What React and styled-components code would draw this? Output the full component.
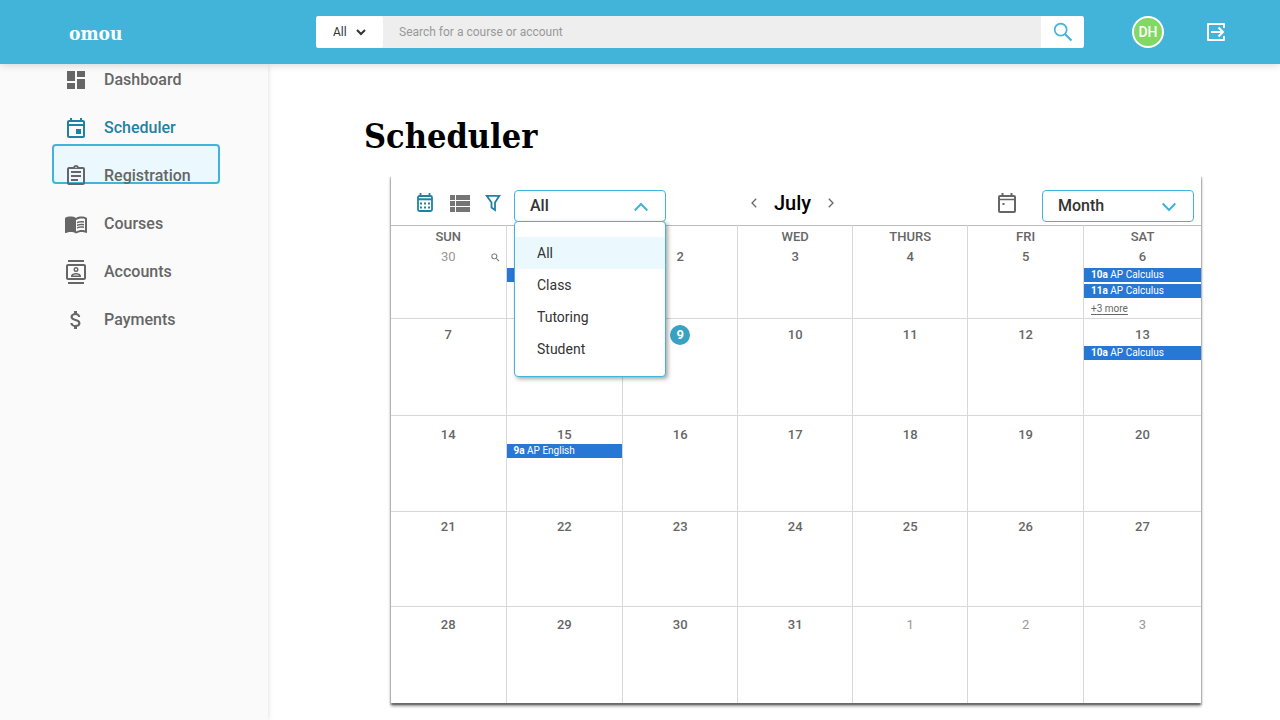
import React, { useState } from "react";
import styled, { createGlobalStyle, css } from "styled-components";
import {
  MdDashboard,
  MdOutlineEvent,
  MdOutlineAssignment,
  MdMenuBook,
  MdOutlineContacts,
  MdAttachMoney,
  MdSearch,
} from "react-icons/md";

const slab = `"Roboto Slab", "DejaVu Serif Condensed", "DejaVu Serif", serif`;

const GlobalStyle = createGlobalStyle`
  *, *::before, *::after { box-sizing: border-box; }
  body {
    margin: 0;
    background: #fff;
    color: #666;
    font-family: Roboto, "Liberation Sans", sans-serif;
  }
  button, input, select { font-family: inherit; }
`;

const Page = styled.div`
  min-height: 100vh;
  display: flex;
  flex-direction: column;
`;

/* Top bar */

const TopBar = styled.header`
  position: relative;
  z-index: 2;
  height: 64px;
  display: flex;
  align-items: center;
  padding-right: 52px;
  background: #43b4d9;
  box-shadow: 0 1px 8px rgba(0, 0, 0, 0.16);
`;

const Logo = styled.a`
  flex: 0 0 316px;
  padding: 2px 0 0 69px;
  color: #fff;
  font: bold 19px/32px ${slab};
  text-decoration: none;
`;

const SearchForm = styled.form`
  flex: 1;
  display: flex;
  height: 32px;
  margin-right: 48px;
  border-radius: 3px;
  overflow: hidden;
  background: #eee;
`;

const ScopeBox = styled.label`
  position: relative;
  width: 67px;
  background: #fff;
  border-radius: 0 3px 3px 0;
`;

const ScopeSelect = styled.select`
  appearance: none;
  width: 100%;
  height: 32px;
  padding: 0 17px;
  border: 0;
  background: transparent;
  color: #333;
  font-size: 12px;
`;

const ScopeArrow = styled.svg`
  position: absolute;
  right: 17px;
  top: 13px;
  pointer-events: none;
`;

const SearchInput = styled.input`
  flex: 1;
  min-width: 0;
  padding: 0 16px;
  border: 0;
  background: #eee;
  color: #333;
  font-size: 12px;
  &::placeholder {
    color: #999;
    opacity: 1;
  }
`;

const SearchButton = styled.button`
  display: flex;
  align-items: center;
  justify-content: center;
  width: 43px;
  padding: 0;
  border: 0;
  background: #fff;
  color: #43b4d9;
`;

const Avatar = styled.button`
  width: 32px;
  height: 32px;
  margin-right: 40px;
  padding: 0;
  border: 2px solid #fff;
  border-radius: 50%;
  background: #82d863;
  color: #fff;
  font-size: 14px;
  font-weight: 500;
`;

const IconButton = styled.button`
  display: inline-flex;
  align-items: center;
  justify-content: center;
  width: ${(p) => p.$w || 24}px;
  height: 24px;
  padding: 0;
  border: 0;
  background: transparent;
  color: ${(p) => p.$color || "#666"};
`;

/* Side navigation */

const Body = styled.div`
  flex: 1;
  display: flex;
`;

const Sidebar = styled.nav`
  flex: 0 0 268px;
  background: #fafafa;
  box-shadow: 0 0 5px rgba(0, 0, 0, 0.15);
`;

const NavList = styled.ul`
  position: relative;
  z-index: 0;
  display: flex;
  flex-direction: column;
  gap: 16px;
  margin: 0;
  padding: 0;
  list-style: none;
`;

const ActiveMarker = styled.li`
  position: absolute;
  z-index: -1;
  left: 52px;
  top: 80px;
  width: 168px;
  height: 40px;
  border: 2px solid #43b4d9;
  border-radius: 4px;
  background: #ebf9ff;
`;

const NavLink = styled.a`
  display: flex;
  align-items: center;
  gap: 16px;
  height: 32px;
  padding-left: 64px;
  color: ${(p) => (p.$active ? "#1f82a1" : "#666")};
  font-size: 16px;
  font-weight: 500;
  text-decoration: none;
`;

const NavLabel = styled.span`
  padding-bottom: 2px;
`;

/* Scheduler page */

const Main = styled.main`
  flex: 1;
  min-width: 0;
  padding: 48px 79px 16px 96px;
`;

const Title = styled.h1`
  margin: 0 0 15px;
  color: #000;
  font: bold 34px/48px ${slab};
`;

const Card = styled.section`
  margin-left: 27px;
  background: #fff;
  box-shadow:
    0 3px 3px rgba(0, 0, 0, 0.45),
    1px 2px 1px rgba(0, 0, 0, 0.15),
    -1px 2px 1px rgba(0, 0, 0, 0.15);
`;

const Toolbar = styled.div`
  display: grid;
  grid-template-columns: 1fr auto 1fr;
  align-items: center;
  height: 50px;
  padding: 6px 7px 0 0;
`;

const ToolGroup = styled.div`
  display: flex;
  align-items: center;
  gap: ${(p) => p.$gap}px;
  ${(p) => p.$start && css`padding-left: 22px;`}
  ${(p) => p.$end && css`justify-content: flex-end;`}
`;

const MonthName = styled.h2`
  margin: 0;
  color: #000;
  font-size: 20px;
  font-weight: 500;
  line-height: 24px;
`;

const Picker = styled.div`
  position: relative;
  width: 152px;
  height: 32px;
  margin-top: 6px;
`;

const pickerFace = css`
  width: 100%;
  height: 32px;
  padding: 0 15px 2px;
  border: 1px solid #43b4d9;
  border-radius: 4px;
  background: #fff;
  color: #333;
  font-size: 16px;
  font-weight: 500;
  text-align: left;
`;

const PickerButton = styled.button`
  ${pickerFace}
`;

const PickerSelect = styled.select`
  appearance: none;
  ${pickerFace}
`;

const PickerArrow = styled.svg`
  position: absolute;
  right: 18px;
  top: 12px;
  pointer-events: none;
`;

const Menu = styled.ul`
  position: absolute;
  z-index: 1;
  top: 31px;
  left: 0;
  width: 100%;
  margin: 0;
  padding: 15px 0 11px;
  border: 1px solid #43b4d9;
  border-radius: 4px;
  background: #fff;
  box-shadow: 2px 2px 4px rgba(0, 0, 0, 0.35);
  list-style: none;
`;

const MenuOption = styled.button`
  display: block;
  width: 100%;
  height: 32px;
  padding: 0 22px;
  border: 0;
  background: ${(p) => (p.$selected ? "#ebf9ff" : "transparent")};
  color: #333;
  font-size: 14px;
  text-align: left;
`;

/* Month table */

const MonthTable = styled.table`
  width: 100%;
  table-layout: fixed;
  border-collapse: collapse;
  border-top: 1px solid #bbb;
`;

const DayColumn = styled.col`
  width: ${(p) => p.$share}%;
`;

const Weekday = styled.th`
  height: 21px;
  padding: 2px 0 0;
  border-left: 1px solid #d8d8d8;
  font-size: 13px;
  font-weight: 500;
  line-height: 18px;
  &:first-child {
    border-left: 0;
  }
`;

const Day = styled.td`
  position: relative;
  height: ${(p) => p.$height}px;
  padding: ${(p) => p.$top}px 0 0;
  border-left: 1px solid #d8d8d8;
  border-bottom: 1px solid #d8d8d8;
  vertical-align: top;
  &:first-child {
    border-left: 0;
  }
  tr:last-child > & {
    border-bottom: 0;
  }
`;

const DayNumber = styled.div`
  color: ${(p) => (p.$muted ? "#999" : "#666")};
  font-size: 13px;
  font-weight: ${(p) => (p.$muted ? 400 : 500)};
  line-height: ${(p) => p.$line}px;
  text-align: center;
`;

const Today = styled.span`
  display: inline-block;
  width: 20px;
  height: 20px;
  border-radius: 50%;
  background: #39a1c2;
  color: #fff;
  font-weight: 700;
`;

const DayZoom = styled.button`
  position: absolute;
  right: 5px;
  top: 5px;
  display: flex;
  padding: 0;
  border: 0;
  background: transparent;
  color: #666;
`;

const Event = styled.a`
  display: block;
  height: 14px;
  margin-top: 1px;
  margin-bottom: 2px;
  padding-left: 7px;
  background: #2777d7;
  color: #fff;
  font-size: 10px;
  line-height: 14px;
  text-decoration: none;
  white-space: nowrap;
  overflow: hidden;
`;

const More = styled.a`
  display: block;
  padding: 2px 7px 0;
  color: #666;
  font-size: 10px;
  line-height: 14px;
  text-underline-offset: 2px;
`;

const navItems = [
  { label: "Dashboard", Icon: MdDashboard },
  { label: "Scheduler", Icon: MdOutlineEvent, active: true },
  { label: "Registration", Icon: MdOutlineAssignment },
  { label: "Courses", Icon: MdMenuBook },
  { label: "Accounts", Icon: MdOutlineContacts },
  { label: "Payments", Icon: MdAttachMoney },
];

const weekdays = [
  { name: "Sunday", label: "SUN", share: 14.2 },
  { name: "Monday", label: "", share: 14.4 },
  { name: "Tuesday", label: "", share: 14.2 },
  { name: "Wednesday", label: "WED", share: 14.2 },
  { name: "Thursday", label: "THURS", share: 14.2 },
  { name: "Friday", label: "FRI", share: 14.3 },
  { name: "Saturday", label: "SAT", share: 14.5 },
];

const weeks = [
  { height: 72, top: 0, line: 20, days: [30, 1, 2, 3, 4, 5, 6] },
  { height: 97, top: 6, line: 20, days: [7, 8, 9, 10, 11, 12, 13] },
  { height: 96, top: 11, line: 16, days: [14, 15, 16, 17, 18, 19, 20] },
  { height: 95, top: 5, line: 20, days: [21, 22, 23, 24, 25, 26, 27] },
  { height: 96, top: 8, line: 20, days: [28, 29, 30, 31, 1, 2, 3] },
];

const events = {
  1: [["10a", "AP Calculus"]],
  6: [["10a", "AP Calculus"], ["11a", "AP Calculus"]],
  13: [["10a", "AP Calculus"]],
  15: [["9a", "AP English"]],
};

const more = { 6: 3 };

function isOutside(week, day) {
  return (week === 0 && day > 7) || (week === 4 && day < 7);
}

function Arrow({ up }) {
  return (
    <PickerArrow width="14" height="10" viewBox="0 0 14 10" fill="none" stroke="#43b4d9" strokeWidth="2" aria-hidden="true">
      <path d={up ? "M.7 8.500 7 2l6.300 6.500" : "M.7 1.500 7 8l6.300-6.500"} />
    </PickerArrow>
  );
}

function SearchIcon() {
  return (
    <svg width="20" height="20" viewBox="0 0 20 20" fill="none" stroke="currentColor" strokeWidth="1.700" aria-hidden="true">
      <circle cx="7.700" cy="7.700" r="6" />
      <path d="M12 12l6.500 6.500" strokeWidth="2.200" />
    </svg>
  );
}

function LogoutIcon() {
  return (
    <svg width="20" height="20" viewBox="0 0 20 20" fill="none" stroke="currentColor" strokeWidth="2" aria-hidden="true">
      <path d="M18 6V2H2v16h16v-4" strokeLinejoin="round" />
      <path d="M5 10h12M12.500 5.500 17 10l-4.500 4.500" />
    </svg>
  );
}

function CalendarGridIcon() {
  return (
    <svg width="18" height="20" viewBox="0 0 18 20" fill="none" stroke="currentColor" aria-hidden="true">
      <rect x="2" y="3" width="14" height="15" rx="1.500" strokeWidth="1.800" />
      <path d="M2 6.300h14" strokeWidth="2" />
      <path d="M4.500 0v4M13.500 0v4" strokeWidth="1.800" />
      <path d="M4 10.500h10M4 14.500h10" strokeWidth="2" strokeDasharray="2 2" />
    </svg>
  );
}

function ListIcon() {
  return (
    <svg width="20" height="17" viewBox="0 0 20 17" fill="#757575" aria-hidden="true">
      <path d="M0 0h5v5H0zM6 0h14v5H6zM0 6h5v5H0zM6 6h14v5H6zM0 12h5v5H0zM6 12h14v5H6z" />
    </svg>
  );
}

function FilterIcon() {
  return (
    <svg width="16" height="18" viewBox="0 0 16 18" fill="none" stroke="currentColor" strokeWidth="1.800" aria-hidden="true">
      <path d="M1.700 1.900h12.600L10 8.500v7.500l-3.500-2.500v-5z" />
    </svg>
  );
}

function TodayIcon() {
  return (
    <svg width="18" height="20" viewBox="0 0 18 20" fill="none" stroke="currentColor" aria-hidden="true">
      <rect x="1" y="3" width="16" height="16" rx="1" strokeWidth="2" />
      <path d="M1 6.500h16" strokeWidth="1.500" />
      <path d="M4.500 0v3M13.500 0v3" strokeWidth="2" />
      <path d="M4.500 11h2" strokeWidth="2" />
    </svg>
  );
}

function Chevron({ left }) {
  return (
    <svg width="6" height="10" viewBox="0 0 6 10" fill="none" stroke="currentColor" strokeWidth="1.300" aria-hidden="true">
      <path d={left ? "M5.200.7 1 5l4.200 4.300" : "M.8.7 5 5 .8 9.300"} />
    </svg>
  );
}

function FilterPicker() {
  const options = ["All", "Class", "Tutoring", "Student"];
  const [open, setOpen] = useState(true);
  const [value, setValue] = useState("All");
  return (
    <Picker>
      <PickerButton type="button" aria-haspopup="true" aria-expanded={open} onClick={() => setOpen(!open)}>
        {value}
      </PickerButton>
      <Arrow up={open} />
      {open && (
        <Menu>
          {options.map((name) => (
            <li key={name}>
              <MenuOption
                type="button"
                $selected={name === value}
                onClick={() => {
                  setValue(name);
                  setOpen(false);
                }}
              >
                {name}
              </MenuOption>
            </li>
          ))}
        </Menu>
      )}
    </Picker>
  );
}

function DayCell({ week, weekIndex, day }) {
  const outside = isOutside(weekIndex, day);
  return (
    <Day $height={week.height} $top={week.top}>
      <DayNumber $muted={outside} $line={week.line}>
        {day === 9 ? <Today>9</Today> : day}
      </DayNumber>
      {weekIndex === 0 && outside && (
        <DayZoom type="button" aria-label="Zoom to day">
          <MdSearch size={11} />
        </DayZoom>
      )}
      {!outside &&
        (events[day] || []).map(([time, name]) => (
          <Event href="#event" key={time}>
            <b>{time}</b> {name}
          </Event>
        ))}
      {!outside && more[day] && <More href="#more">+{more[day]} more</More>}
    </Day>
  );
}

export default function App() {
  return (
    <Page>
      <GlobalStyle />
      <TopBar>
        <Logo href="#home">omou</Logo>
        <SearchForm role="search" onSubmit={(e) => e.preventDefault()}>
          <ScopeBox>
            <ScopeSelect aria-label="Search scope" defaultValue="All">
              <option>All</option>
            </ScopeSelect>
            <ScopeArrow width="10" height="7" viewBox="0 0 10 7" fill="none" stroke="#333" strokeWidth="2" aria-hidden="true">
              <path d="M1 1l4 4 4-4" />
            </ScopeArrow>
          </ScopeBox>
          <SearchInput aria-label="Search" placeholder="Search for a course or account" />
          <SearchButton aria-label="Submit search">
            <SearchIcon />
          </SearchButton>
        </SearchForm>
        <Avatar type="button">DH</Avatar>
        <IconButton type="button" $color="#fff" aria-label="Log out">
          <LogoutIcon />
        </IconButton>
      </TopBar>
      <Body>
        <Sidebar aria-label="Main">
          <NavList>
            <ActiveMarker aria-hidden="true" />
            {navItems.map(({ label, Icon, active }) => (
              <li key={label}>
                <NavLink href={`#${label.toLowerCase()}`} $active={active} aria-current={active ? "page" : undefined}>
                  <Icon size={24} />
                  <NavLabel>{label}</NavLabel>
                </NavLink>
              </li>
            ))}
          </NavList>
        </Sidebar>
        <Main>
          <Title>Scheduler</Title>
          <Card aria-label="Calendar">
            <Toolbar>
              <ToolGroup $start $gap={11}>
                <IconButton type="button" $color="#1f82a1" aria-label="Calendar view">
                  <CalendarGridIcon />
                </IconButton>
                <IconButton type="button" aria-label="List view">
                  <ListIcon />
                </IconButton>
                <IconButton type="button" $w={20} $color="#1f82a1" aria-label="Filter">
                  <FilterIcon />
                </IconButton>
                <FilterPicker />
              </ToolGroup>
              <ToolGroup $gap={12}>
                <IconButton type="button" $w={16} aria-label="Previous month">
                  <Chevron left />
                </IconButton>
                <MonthName>July</MonthName>
                <IconButton type="button" $w={16} aria-label="Next month">
                  <Chevron />
                </IconButton>
              </ToolGroup>
              <ToolGroup $end $gap={23}>
                <IconButton type="button" aria-label="Go to today">
                  <TodayIcon />
                </IconButton>
                <Picker>
                  <PickerSelect aria-label="Calendar range" defaultValue="Month">
                    <option>Month</option>
                    <option>Week</option>
                    <option>Day</option>
                  </PickerSelect>
                  <Arrow />
                </Picker>
              </ToolGroup>
            </Toolbar>
            <MonthTable>
              <colgroup>
                {weekdays.map(({ name, share }) => (
                  <DayColumn key={name} $share={share} />
                ))}
              </colgroup>
              <thead>
                <tr>
                  {weekdays.map(({ name, label }) => (
                    <Weekday key={name} scope="col" aria-label={name}>
                      {label}
                    </Weekday>
                  ))}
                </tr>
              </thead>
              <tbody>
                {weeks.map((week, index) => (
                  <tr key={week.days[0]}>
                    {week.days.map((day) => (
                      <DayCell key={day} week={week} weekIndex={index} day={day} />
                    ))}
                  </tr>
                ))}
              </tbody>
            </MonthTable>
          </Card>
        </Main>
      </Body>
    </Page>
  );
}
